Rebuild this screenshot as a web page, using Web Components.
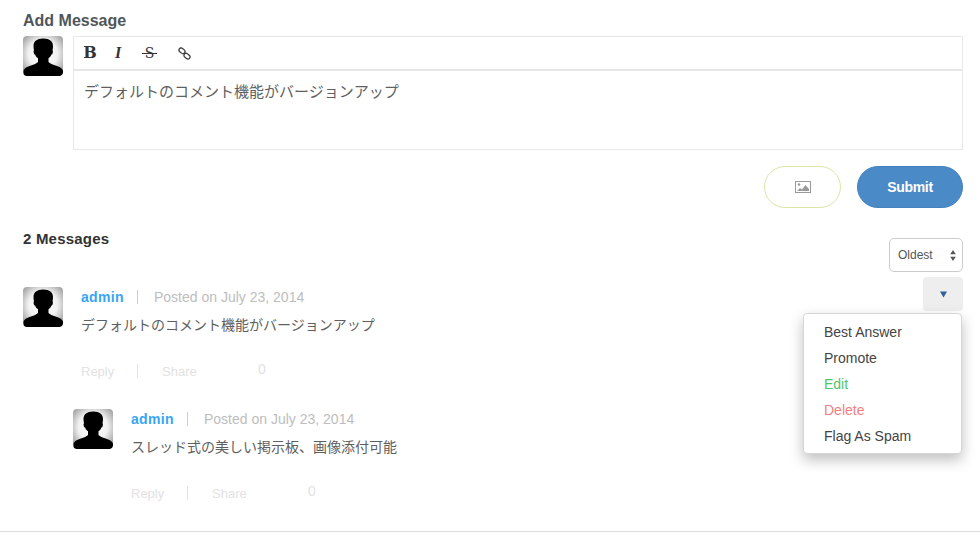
<!DOCTYPE html>
<html>
<head>
<meta charset="utf-8">
<title>Messages</title>
<style>
  html, body { margin: 0; background: #fff; }
  body {
    font-family: "Liberation Sans", "Noto Sans CJK JP", sans-serif;
    color: #444;
  }
</style>
</head>
<body>
<comment-board></comment-board>

<script>
/**
 * Message board: editor, sort control and threaded messages
 */

class UserAvatar extends HTMLElement {
  connectedCallback() {
    this.attachShadow({ mode: "open" });
    this.shadowRoot.innerHTML = `
    <style>
      :host { display: block; width: 40px; height: 40px; flex: none; }
      svg { display: block; border-radius: 4px; }
    </style>
    <svg width="40" height="40" viewBox="0 0 40 40" xmlns="http://www.w3.org/2000/svg">
      <defs>
        <radialGradient id="bg" cx="50%" cy="45%" r="60%">
          <stop offset="0" stop-color="#ffffff"/>
          <stop offset=".6" stop-color="#f2f2f2"/>
          <stop offset="1" stop-color="#aaaaaa"/>
        </radialGradient>
      </defs>
      <rect width="40" height="40" fill="url(#bg)"/>
      <path fill="#000" d="M20 2.500c-6 0-9.500 2.800-9.500 7.500 0 1.500.2 3 .5 4.300-.6.300-.5 1.500-.2 2.600.3 1 .8 1.500 1.300 1.500.6 1.600 1.500 2.900 2.900 3.900v3.700c-1.500 1.500-4 2.700-7 3.600-3 .9-5 1.900-6.500 3.300-.6.600-1 1.200-1 2.400v1.200C.5 38.500 1.500 40 3.500 40h33c2 0 3.500-1.500 3.500-3.500v-1.200c0-1.200-.4-1.800-1-2.400-1.500-1.400-3.500-2.400-6.500-3.300-3-.9-5.500-2.100-7-3.600v-3.700c1.400-1 2.300-2.300 2.900-3.900.5 0 1-.5 1.300-1.500.3-1.100.4-2.300-.2-2.600.3-1.300.5-2.800.5-4.300 0-4.700-3.500-7.500-9.500-7.500z"/>
    </svg>
    `;
  }
}

class MessageEditor extends HTMLElement {
  connectedCallback() {
    this.attachShadow({ mode: "open" });
    this.shadowRoot.innerHTML = `
    <style>
      :host { display: block; flex: 1; border: 1px solid #e8e8e8; height: 112px; }
      .tools {
        display: flex;
        align-items: center;
        height: 32px;
        border-bottom: 2px solid #e6e6e6;
        padding-left: 7px;
        gap: 10px;
        color: #333;
      }
      .tools span {
        width: 18px;
        text-align: center;
        font: 16px/1 "DejaVu Serif", "Liberation Serif", serif;
      }
      .tools .b { font-weight: bold; }
      .tools .i { font-weight: bold; font-style: italic; font-family: "Liberation Serif", serif; }
      .tools .s {
        width: 15px;
        margin: 0 2px 0 5px;
        font-size: 14px;
        background: linear-gradient(#333, #333) center / 100% 1px no-repeat;
      }
      svg { display: block; margin-left: 9px; }
      .text {
        padding: 11px 10px 0;
        font: 15px/20px "Liberation Sans", "Noto Sans CJK JP", sans-serif;
        color: #5f5f5f;
      }
    </style>
    <div class="tools">
      <span class="b">B</span>
      <span class="i">I</span>
      <span class="s">S</span>
      <svg width="13" height="13" viewBox="0 0 14 14" xmlns="http://www.w3.org/2000/svg" fill="none" stroke="#333" stroke-width="1.300">
        <rect x=".8" y="1.800" width="7" height="4.600" rx="2.300" transform="rotate(40 4.300 4.100)"/>
        <rect x="6.200" y="7.600" width="7" height="4.600" rx="2.300" transform="rotate(40 9.700 9.900)"/>
      </svg>
    </div>
    <div class="text"><slot></slot></div>
    `;
  }
}

class PillButton extends HTMLElement {
  connectedCallback() {
    this.attachShadow({ mode: "open" });
    this.shadowRoot.innerHTML = `
    <style>
      :host {
        display: flex;
        align-items: center;
        justify-content: center;
        box-sizing: border-box;
        height: 42px;
        width: 77px;
        border: 1px solid #d9e6a8;
        border-radius: 21px;
        background: #fff;
      }
      :host(.primary) {
        width: 106px;
        border: 1px solid #4582bf;
        background: #4a8ac7;
        color: #fff;
        font: bold 14px "Liberation Sans", sans-serif;
        letter-spacing: -.3px;
      }
    </style>
    <slot></slot>
    `;
  }
}

class SortSelect extends HTMLElement {
  connectedCallback() {
    this.attachShadow({ mode: "open" });
    this.shadowRoot.innerHTML = `
    <style>
      :host {
        display: flex;
        align-items: center;
        justify-content: space-between;
        box-sizing: border-box;
        width: 74px;
        height: 34px;
        padding: 0 6px 0 8px;
        border: 1px solid #ccc;
        border-radius: 5px;
        font-size: 12px;
        color: #555;
      }
      svg { display: block; }
    </style>
    <slot></slot>
    <svg width="6" height="11" viewBox="0 0 6 11" xmlns="http://www.w3.org/2000/svg" fill="#555">
      <path d="M3 0l2.800 4.300H.2zM3 11L.2 6.700h5.600z"/>
    </svg>
    `;
  }
}

class ActionMenu extends HTMLElement {
  connectedCallback() {
    this.attachShadow({ mode: "open" });
    this.shadowRoot.innerHTML = `
    <style>
      :host {
        position: absolute;
        top: 36px;
        right: 1px;
        box-sizing: border-box;
        width: 159px;
        height: 141px;
        padding: 5px 0 0 20px;
        background: #fff;
        border: 1px solid #d6d6d6;
        border-radius: 4px;
        box-shadow: 0 6px 14px rgba(0,0,0,.25);
        font-size: 14px;
        line-height: 26px;
        color: #444;
        z-index: 2;
      }
      ::slotted(div) { height: 26px; }
      ::slotted(.edit) { color: #4fc56a; }
      ::slotted(.delete) { color: #f47f7f; }
    </style>
    <slot></slot>
    `;
  }
}

class MessageItem extends HTMLElement {
  connectedCallback() {
    this.attachShadow({ mode: "open" });
    this.shadowRoot.innerHTML = `
    <style>
      :host { display: block; position: relative; height: 122px; }
      :host(.reply) { margin-left: 50px; }
      .wrap { display: flex; }
      user-avatar { margin-top: 10px; }
      .body { flex: 1; margin-left: 18px; padding-top: 11px; }
      .meta { display: flex; align-items: center; height: 18px; font-size: 14px; color: #bdbdbd; }
      .name { color: #38a5f5; font-weight: bold; width: 56px; letter-spacing: .3px; }
      .bar { width: 1px; height: 14px; background: #ccc; margin-right: 16px; }
      .text {
        margin-top: 9px;
        font: 14px/20px "Liberation Sans", "Noto Sans CJK JP", sans-serif;
        color: #5f5f5f;
      }
      .foot {
        display: flex;
        align-items: center;
        margin-top: 26px;
        height: 20px;
        font-size: 13px;
        color: #e2e2e2;
      }
      .foot .reply { width: 56px; }
      .foot .bar { background: #e2e2e2; margin-right: 24px; }
      .foot .share { width: 96px; }
      .foot .count { position: relative; top: -2px; font-size: 14px; }
      .caret {
        display: flex;
        align-items: center;
        justify-content: center;
        flex: none;
        width: 40px;
        height: 34px;
        background: #eee;
        border-radius: 4px;
      }
    </style>
    <div class="wrap">
      <user-avatar></user-avatar>
      <div class="body">
        <div class="meta">
          <span class="name">${this.getAttribute("author")}</span>
          <span class="bar"></span>
          <span>${this.getAttribute("date")}</span>
        </div>
        <div class="text"><slot></slot></div>
        <div class="foot">
          <span class="reply">Reply</span>
          <span class="bar"></span>
          <span class="share">Share</span>
          <span class="count">0</span>
        </div>
      </div>
      ${this.hasAttribute("menu") ? `
      <div class="caret">
        <svg width="7" height="7" viewBox="0 0 7 7" xmlns="http://www.w3.org/2000/svg"><path fill="#2f6298" d="M0 .5h7L3.500 6.500z"/></svg>
      </div>` : ""}
    </div>
    <slot name="menu"></slot>
    `;
  }
}

class CommentBoard extends HTMLElement {
  connectedCallback() {
    this.attachShadow({ mode: "open" });
    this.shadowRoot.innerHTML = `
    <style>
      :host { display: block; height: 559px; box-sizing: border-box; padding-top: 12px; }
      .pad { padding: 0 17px 0 23px; }
      h2 { margin: 0; font-size: 16px; line-height: 18px; color: #50565a; }
      .compose { display: flex; gap: 10px; margin-top: 6px; }
      .actions { display: flex; justify-content: flex-end; gap: 16px; margin-top: 16px; }
      .sort { display: flex; justify-content: space-between; height: 47px; margin-top: 22px; }
      h3 { margin: 0; font-size: 15px; line-height: 18px; color: #333; letter-spacing: .2px; }
      .sort sort-select { margin-top: 8px; }
      hr { margin: 0; border: 0; border-top: 1px solid #ddd; margin-top: 10px; }
    </style>
    <div class="pad">
      <h2>Add Message</h2>
      <div class="compose">
        <user-avatar></user-avatar>
        <message-editor>デフォルトのコメント機能がバージョンアップ</message-editor>
      </div>
      <div class="actions">
        <pill-button>
          <svg width="16" height="12" viewBox="0 0 16 12" xmlns="http://www.w3.org/2000/svg">
            <rect x=".5" y=".5" width="15" height="11" fill="#fff" stroke="#999"/>
            <circle cx="4" cy="3.500" r="1.300" fill="#999"/>
            <path fill="#999" d="M2 10l3-3 2 1.500L10.500 4 14 8v2z"/>
          </svg>
        </pill-button>
        <pill-button class="primary">Submit</pill-button>
      </div>
      <div class="sort">
        <h3>2 Messages</h3>
        <sort-select>Oldest</sort-select>
      </div>
      <message-item author="admin" date="Posted on July 23, 2014" menu>
        デフォルトのコメント機能がバージョンアップ
        <action-menu slot="menu">
          <div>Best Answer</div>
          <div>Promote</div>
          <div class="edit">Edit</div>
          <div class="delete">Delete</div>
          <div>Flag As Spam</div>
        </action-menu>
      </message-item>
      <message-item class="reply" author="admin" date="Posted on July 23, 2014">
        スレッド式の美しい掲示板、画像添付可能
      </message-item>
    </div>
    <hr>
    `;
  }
}

customElements.define("user-avatar", UserAvatar);
customElements.define("message-editor", MessageEditor);
customElements.define("pill-button", PillButton);
customElements.define("sort-select", SortSelect);
customElements.define("action-menu", ActionMenu);
customElements.define("message-item", MessageItem);
customElements.define("comment-board", CommentBoard);
</script>
</body>
</html>
